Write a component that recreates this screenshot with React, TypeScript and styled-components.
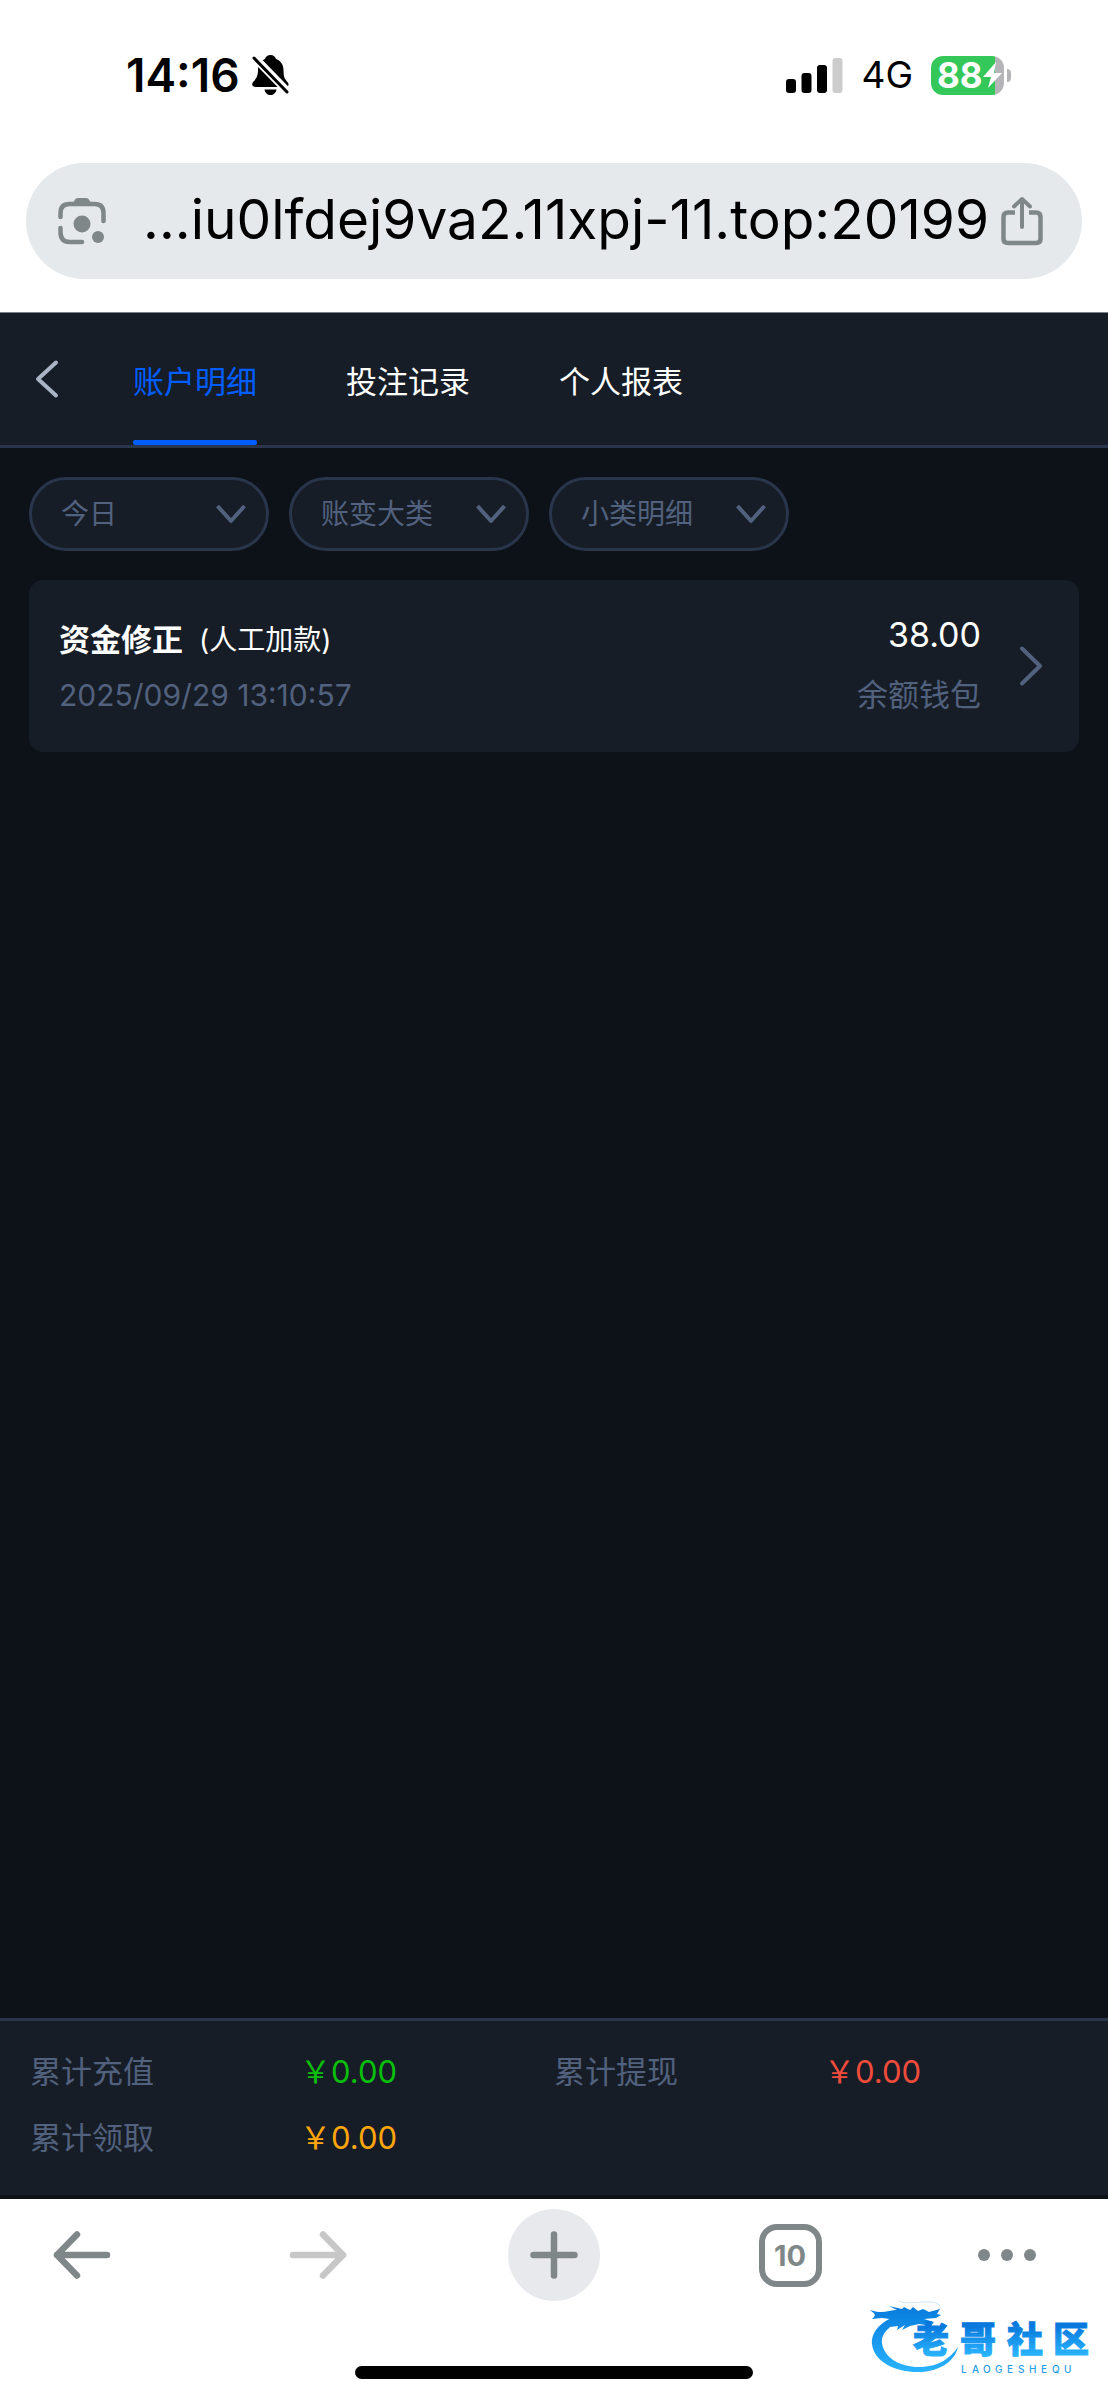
import React from 'react';
import styled, { createGlobalStyle } from 'styled-components';

const color = {
  page: '#0d1118',
  panel: '#161d27',
  line: '#28354a',
  muted: '#52617d',
  accent: '#005dff',
  chrome: '#808789',
};

const GlobalStyle = createGlobalStyle`
  * { box-sizing: border-box; }
  body {
    margin: 0;
    background: #fff;
    font-family: Inter, 'Noto Sans CJK SC', sans-serif;
  }
  button, input, select {
    font-family: inherit;
    color: inherit;
    margin: 0;
    padding: 0;
    border: 0;
    background: none;
  }
  svg { display: block; flex: none; }
`;

const Screen = styled.div`
  display: flex;
  flex-direction: column;
  min-height: 100vh;
`;

const StatusBar = styled.div`
  display: flex;
  align-items: center;
  justify-content: space-between;
  padding: 45px 97px 58px 126px;
  height: 163px;
  color: #000;
`;

const StatusGroup = styled.div<{ $gap: number }>`
  display: flex;
  align-items: center;
  gap: ${(p) => p.$gap}px;
`;

const Clock = styled.time`
  font-size: 46px;
  font-weight: 600;
  line-height: 60px;
`;

const Network = styled.span`
  font-size: 37px;
  line-height: 60px;
`;

const Battery = styled.span`
  display: flex;
  align-items: center;
  gap: 3px;
  &::after {
    content: '';
    width: 4px;
    height: 13px;
    border-radius: 0 4px 4px 0;
    background: #b5b5b7;
  }
`;

const BatteryBody = styled.span`
  display: flex;
  align-items: center;
  width: 73px;
  height: 39px;
  padding-left: 6px;
  border-radius: 12px;
  background: linear-gradient(to right, #34c759 88%, #b5b5b7 88%);
  color: #fff;
  font-size: 35px;
  font-weight: 700;
  line-height: 39px;
`;

const AddressBar = styled.div`
  display: flex;
  align-items: center;
  margin: 0 26px 33px;
  height: 116px;
  padding: 0 39px 0 31px;
  border-radius: 58px;
  background: #e5e9ec;
  color: ${color.chrome};
`;

const IconButton = styled.button`
  display: flex;
  flex: none;
  align-items: center;
  justify-content: center;
  cursor: pointer;
`;

const Address = styled.input`
  flex: 1;
  min-width: 0;
  margin: 0 12px 0 32px;
  height: 84px;
  padding-bottom: 4px;
  color: #000;
  font-size: 55px;
  text-align: right;
  outline: none;
`;

const Page = styled.main`
  display: flex;
  flex: 1;
  flex-direction: column;
  border-top: 1px solid #7d8087;
  background: ${color.page};
`;

const Header = styled.header`
  display: flex;
  align-items: stretch;
  height: 135px;
  padding-left: 30px;
  border-bottom: 3px solid ${color.line};
  background: ${color.panel};
  color: #aab4c5;
`;

const Tabs = styled.nav`
  display: flex;
  gap: 89px;
  margin-left: 69px;
`;

const Tab = styled.a<{ $active?: boolean }>`
  position: relative;
  display: flex;
  align-items: center;
  color: ${(p) => (p.$active ? color.accent : '#fff')};
  font-size: 31px;
  text-decoration: none;
  &::after {
    content: '';
    position: absolute;
    right: 0;
    bottom: 0;
    left: 0;
    height: 5px;
    border-radius: 2px;
    background: ${(p) => (p.$active ? color.accent : 'transparent')};
  }
`;

const Filters = styled.form`
  display: flex;
  gap: 20px;
  padding: 29px;
  color: ${color.muted};
`;

const Filter = styled.label`
  display: grid;
  flex: 0 1 240px;
  align-items: center;
  svg {
    grid-area: 1 / 1;
    justify-self: end;
    margin-right: 23px;
    pointer-events: none;
  }
`;

const FilterSelect = styled.select`
  grid-area: 1 / 1;
  width: 100%;
  height: 74px;
  padding: 0 60px 0 29px;
  border: 3px solid ${color.line};
  border-radius: 37px;
  background: ${color.panel};
  font-size: 28px;
  appearance: none;
`;

const Records = styled.ul`
  flex: 1;
  margin: 0;
  padding: 0 29px;
  list-style: none;
`;

const Record = styled.a`
  display: flex;
  align-items: center;
  min-height: 172px;
  padding: 0 36px 0 30px;
  border-radius: 14px;
  background: ${color.panel};
  color: ${color.muted};
  text-decoration: none;
`;

const RecordColumn = styled.div<{ $end?: boolean }>`
  display: flex;
  flex-direction: column;
  align-items: ${(p) => (p.$end ? 'flex-end' : 'flex-start')};
  gap: 14px;
  margin-right: ${(p) => (p.$end ? '38px' : 'auto')};
`;

const RecordTitle = styled.div`
  display: flex;
  align-items: center;
  gap: 16px;
  color: #fff;
  font-size: 28px;
  line-height: 44px;
  strong {
    font-size: 31px;
    font-weight: 700;
  }
`;

const RecordDate = styled.time`
  font-size: 30px;
  line-height: 38px;
`;

const Amount = styled.span`
  color: #fff;
  font-size: 34px;
  line-height: 44px;
`;

const Wallet = styled.span`
  font-size: 31px;
  line-height: 48px;
`;

const Totals = styled.dl`
  display: grid;
  grid-template-columns: repeat(2, 1fr);
  margin: 0 0 4px;
  padding: 18px 30px 24px;
  border-top: 3px solid ${color.line};
  background: ${color.panel};
  line-height: 66px;
`;

const Total = styled.div`
  display: grid;
  grid-template-columns: 270px 1fr;
`;

const TotalLabel = styled.dt`
  color: ${color.muted};
  font-size: 31px;
`;

const TotalValue = styled.dd<{ $color: string }>`
  margin: 0;
  color: ${(p) => p.$color};
  font-size: 31px;
`;

const BrowserBar = styled.footer`
  position: relative;
  display: flex;
  flex-direction: column;
  align-items: center;
  justify-content: space-between;
  height: 201px;
  padding: 10px 0 21px;
  background: #fff;
`;

const BrowserActions = styled.div`
  display: flex;
  align-self: stretch;
  align-items: center;
  justify-content: space-between;
  padding: 0 74px 0 36px;
  color: ${color.chrome};
`;

const ActionButton = styled(IconButton)<{ $filled?: boolean }>`
  width: 92px;
  height: 92px;
  border-radius: 50%;
  background: ${(p) => (p.$filled ? '#e8e9ed' : 'none')};
  &:disabled { color: #c7c7c7; }
`;

const MoreButton = styled(IconButton)`
  width: 54px;
  height: 92px;
`;

const TabCount = styled.span`
  width: 63px;
  height: 63px;
  border: 6px solid currentColor;
  border-radius: 18px;
  font-size: 29px;
  font-weight: 700;
  line-height: 51px;
  text-align: center;
`;

const HomeIndicator = styled.div`
  width: 36%;
  height: 13px;
  border-radius: 7px;
  background: #000;
`;

const Watermark = styled.svg`
  position: absolute;
  right: 10px;
  bottom: 22px;
`;

const BellOff = () => (
  <svg width="37" height="40" viewBox="0 0 37 40" aria-label="静音">
    <path d="M18.500 0c3 0 5 2 5.500 4 5 2 7.500 6 7.500 11 0 8 1.500 9 4 12 2 2.500 1 5-2 5H4c-4 0-5-3-2.500-5.500C4 24 6 21 6 15 6 9 9 5.500 13 4c.5-2 2.500-4 5.500-4zM12.500 34.500h12c-.5 3.500-3 5.500-6 5.500s-5.500-2-6-5.500z" fill="#000" />
    <path d="M2 2 36 37" stroke="#fff" strokeWidth="8" />
    <path d="M2 3 35 37" stroke="#000" strokeWidth="3" strokeLinecap="round" />
  </svg>
);

const Signal = () => (
  <svg width="57" height="36" viewBox="0 0 57 36" aria-label="信号">
    <rect x="0" y="22" width="10" height="14" rx="3" />
    <rect x="15.500" y="16" width="10" height="20" rx="3" />
    <rect x="31" y="8" width="10" height="28" rx="3" />
    <rect x="46.500" y="1" width="10" height="35" rx="3" fill="#ccc" />
  </svg>
);

const Bolt = () => (
  <svg width="19" height="28" viewBox="0 0 19 28">
    <path d="M13 1 0 16h8L5 27 19 12h-8z" fill="#fff" />
  </svg>
);

const Lens = () => (
  <svg width="50" height="50" viewBox="0 0 50 50" fill="none" stroke="currentColor" strokeWidth="4.500" strokeLinecap="round">
    <path d="M3.500 21v-4c0-6 3-9 9-9h25c6 0 9 3 9 9v8M3.500 32v4c0 7 3 10 9 10H25" />
    <path d="M15 8c2-1 2-6 6-6h8c4 0 4 5 6 6z" fill="currentColor" stroke="none" />
    <circle cx="25" cy="28" r="8.500" fill="currentColor" stroke="none" />
    <circle cx="41" cy="41" r="6" fill="currentColor" stroke="none" />
  </svg>
);

const Share = () => (
  <svg width="42" height="50" viewBox="0 0 42 50" fill="none" stroke="currentColor" strokeWidth="4.500" strokeLinecap="round" strokeLinejoin="round">
    <path d="M14 16.500H7c-3 0-4.500 1.500-4.500 4.500v22c0 2.500 1.500 4 4.500 4h28c3 0 4.500-1.500 4.500-4V21c0-3-1.500-4.500-4.500-4.500h-7" strokeLinecap="butt" />
    <path d="M21 31V3M13 10.500 21 3l8 7.500" strokeWidth="4" />
  </svg>
);

const Back = () => (
  <svg width="34" height="42" viewBox="0 0 34 42" fill="none" stroke="currentColor" strokeWidth="4" strokeLinecap="round" strokeLinejoin="round">
    <path d="M26 4.500 8 21 26 37.500" />
  </svg>
);

const ChevronDown = () => (
  <svg width="30" height="20" viewBox="0 0 30 20" fill="none" stroke="currentColor" strokeWidth="4">
    <path d="M1.500 2 15 17 28.500 2" strokeLinejoin="round" />
  </svg>
);

const ChevronRight = () => (
  <svg width="24" height="42" viewBox="0 0 24 42" fill="none" stroke="currentColor" strokeWidth="4" strokeLinecap="round" strokeLinejoin="round">
    <path d="M3 3.500 21 21 3 38.500" />
  </svg>
);

const Arrow = ({ forward }: { forward?: boolean }) => (
  <svg width="58" height="50" viewBox="0 0 58 50" fill="none" stroke="currentColor" strokeWidth="6.500" strokeLinecap="round" strokeLinejoin="round">
    <path d={forward ? 'M4 25h50M34 4.500 54 25 34 45.500' : 'M54 25H4M24 4.500 4 25l20 20.500'} />
  </svg>
);

const Plus = () => (
  <svg width="48" height="48" viewBox="0 0 48 48" stroke="currentColor" strokeWidth="6.500" strokeLinecap="round">
    <path d="M3.500 24h41M24 3.500v41" />
  </svg>
);

const Dots = () => (
  <svg width="58" height="12" viewBox="0 0 58 12" fill="currentColor">
    <circle cx="6" cy="6" r="6" />
    <circle cx="29" cy="6" r="6" />
    <circle cx="52" cy="6" r="6" />
  </svg>
);

const BrandMark = () => (
  <Watermark width="228" height="78" viewBox="0 0 228 78" role="img" aria-label="老哥社区">
    <defs>
      <linearGradient id="brand" x1="0" y1="8" x2="0" y2="74" gradientUnits="userSpaceOnUse">
        <stop offset="0" stopColor="#087cdd" />
        <stop offset="1" stopColor="#2ab5ff" />
      </linearGradient>
      <linearGradient id="brandText" x1="0" y1="26" x2="0" y2="56" gradientUnits="userSpaceOnUse">
        <stop offset="0" stopColor="#0878dc" />
        <stop offset="1" stopColor="#2ab5ff" />
      </linearGradient>
    </defs>
    <g fill="url(#brand)">
      <path d="M30 15C12 20 1 31 2 44c2 18 24 29 49 28 19-1 34-11 37-25C80 59 68 66 52 67 31 68 14 58 12 43 11 32 22 23 38 19z" />
      <path d="M0 10c6 2 12 3 19 1 4-1 6-1 8-1l-8-4 13 3 2-2 6 3 3-3 5 4 5-2 6 3 11-3-3 5 4 1-5 3-12 1 10 3-3 4-12-2-9 2-8 4 3-5-8 5 1-4-8 1 4-5-8 1 4-4-8-1-10 1C8 14 3 13 0 10z" />
    </g>
    <path d="M29 1c8 4 22 0 31 1 7 0 11 3 10 7" fill="none" stroke="#cfe6f5" />
    <text
      x="43 90 137 183"
      y="53"
      fill="url(#brandText)"
      stroke="url(#brandText)"
      strokeWidth="1"
      fontFamily="'Noto Sans CJK SC', sans-serif"
      fontWeight="900"
      fontSize="36"
    >
      老哥社区
    </text>
    <text x="91 102 113 125 137 148 159 171 182 194" y="73" fill="#2a9ee8" fontFamily="Inter, sans-serif" fontWeight="500" fontSize="10">
      LAOGESHEQU
    </text>
  </Watermark>
);

const filters = ['今日', '账变大类', '小类明细'];

const totals = [
  { label: '累计充值', value: '￥0.00', color: '#0abf0a' },
  { label: '累计提现', value: '￥0.00', color: '#f04c3c' },
  { label: '累计领取', value: '￥0.00', color: '#ffa60a' },
];

export default function App() {
  return (
    <>
      <GlobalStyle />
      <Screen>
        <StatusBar>
          <StatusGroup $gap={12}>
            <Clock>14:16</Clock>
            <BellOff />
          </StatusGroup>
          <StatusGroup $gap={18}>
            <Signal />
            <Network>4G</Network>
            <Battery>
              <BatteryBody>
                88
                <Bolt />
              </BatteryBody>
            </Battery>
          </StatusGroup>
        </StatusBar>
        <AddressBar>
          <IconButton type="button" aria-label="搜索图片">
            <Lens />
          </IconButton>
          <Address aria-label="网址" readOnly value="...iu0lfdej9va2.11xpj-11.top:20199" />
          <IconButton type="button" aria-label="分享">
            <Share />
          </IconButton>
        </AddressBar>

        <Page>
          <Header>
            <IconButton type="button" aria-label="返回">
              <Back />
            </IconButton>
            <Tabs>
              <Tab href="#account" $active aria-current="page">账户明细</Tab>
              <Tab href="#bets">投注记录</Tab>
              <Tab href="#report">个人报表</Tab>
            </Tabs>
          </Header>
          <Filters>
            {filters.map((name) => (
              <Filter key={name}>
                <FilterSelect aria-label={name}>
                  <option>{name}</option>
                </FilterSelect>
                <ChevronDown />
              </Filter>
            ))}
          </Filters>
          <Records>
            <li>
              <Record href="#record">
                <RecordColumn>
                  <RecordTitle>
                    <strong>资金修正</strong>
                    <span>(人工加款)</span>
                  </RecordTitle>
                  <RecordDate>2025/09/29 13:10:57</RecordDate>
                </RecordColumn>
                <RecordColumn $end>
                  <Amount>38.00</Amount>
                  <Wallet>余额钱包</Wallet>
                </RecordColumn>
                <ChevronRight />
              </Record>
            </li>
          </Records>
          <Totals>
            {totals.map((t) => (
              <Total key={t.label}>
                <TotalLabel>{t.label}</TotalLabel>
                <TotalValue $color={t.color}>{t.value}</TotalValue>
              </Total>
            ))}
          </Totals>
        </Page>

        <BrowserBar>
          <BrowserActions>
            <ActionButton type="button" aria-label="后退">
              <Arrow />
            </ActionButton>
            <ActionButton type="button" aria-label="前进" disabled>
              <Arrow forward />
            </ActionButton>
            <ActionButton type="button" aria-label="新标签页" $filled>
              <Plus />
            </ActionButton>
            <ActionButton type="button" aria-label="标签页">
              <TabCount>10</TabCount>
            </ActionButton>
            <MoreButton type="button" aria-label="更多">
              <Dots />
            </MoreButton>
          </BrowserActions>
          <HomeIndicator />
          <BrandMark />
        </BrowserBar>
      </Screen>
    </>
  );
}
